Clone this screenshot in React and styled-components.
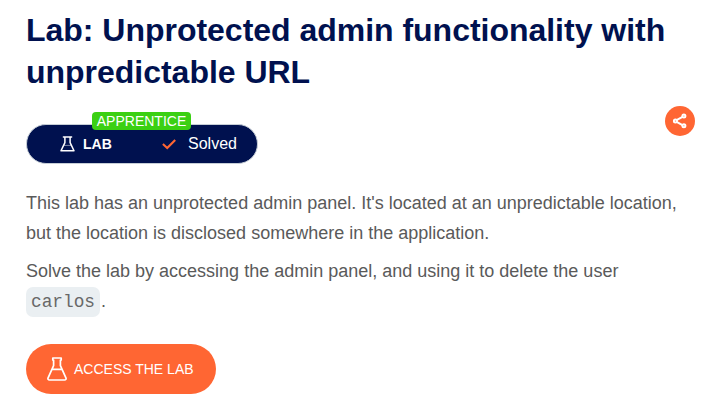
import React from 'react';
import styled, { createGlobalStyle } from 'styled-components';

const GlobalStyle = createGlobalStyle`
  * { box-sizing: border-box; }
  body {
    margin: 0;
    background: #fff;
    font-family: "Liberation Sans", Arial, sans-serif;
    overflow: hidden;
  }
`;

const Page = styled.main`
  width: 717px;
  height: 406px;
  padding: 9px 22px 0 26px;
`;

const Title = styled.h1`
  margin: 0;
  width: 660px;
  font-size: 32px;
  line-height: 42px;
  font-weight: 700;
  letter-spacing: -0.02px;
  color: #00114f;
`;

const StatusBar = styled.div`
  display: flex;
  justify-content: space-between;
  align-items: flex-start;
  height: 58px;
  margin-top: 13px;
`;

const StatusPill = styled.div`
  position: relative;
  display: flex;
  align-items: center;
  width: 232px;
  height: 40px;
  margin-top: 18px;
  padding-left: 33px;
  border: 1px solid #c6ced6;
  border-radius: 20px;
  background: #00114f;
  color: #fff;
`;

const LevelBadge = styled.span`
  position: absolute;
  left: 65px;
  top: -13px;
  width: 99px;
  height: 18px;
  border-radius: 4px;
  background: #3bd013;
  font-size: 14px;
  line-height: 19px;
  text-align: center;
`;

const LabLabel = styled.strong`
  width: 79px;
  margin-left: 8px;
  font-size: 14px;
`;

const SolvedLabel = styled.span`
  margin-left: 12px;
  font-size: 16px;
`;

const ShareButton = styled.button`
  display: grid;
  place-items: center;
  width: 30px;
  height: 30px;
  padding: 0;
  border: 0;
  border-radius: 50%;
  background: #ff6633;
`;

const Description = styled.section`
  margin-top: 24px;
  font-size: 18px;
  line-height: 30px;
  color: #5a5a5a;
`;

const Paragraph = styled.p`
  margin: 0 0 8px;
`;

const Code = styled.code`
  display: inline-block;
  height: 30px;
  margin: 1px 1px 0 0;
  padding: 0 5px;
  border-radius: 7px;
  background: #eaeff2;
  font-family: "Liberation Mono", "Courier New", monospace;
  font-size: 17.8px;
  color: #686868;
  vertical-align: top;
`;

const AccessButton = styled.button`
  display: flex;
  align-items: center;
  width: 190px;
  height: 50px;
  margin-top: 27px;
  padding: 0 0 0 21px;
  border: 0;
  border-radius: 25px;
  background: #ff6633;
  color: #fff;
  font-family: inherit;
  font-size: 14px;
`;

const ButtonLabel = styled.span`
  margin-left: 7px;
`;

function Flask() {
  return (
    <svg width="20" height="24" viewBox="0 0 20 24" fill="none" stroke="#fff"
      strokeWidth="1.7" strokeLinejoin="round" strokeLinecap="round">
      <path d="M5.8 1h8.4v2h-.8v5.6L18.9 20.8c.5 1.3-.1 2.2-1.3 2.2H2.4c-1.2 0-1.8-.9-1.3-2.2L6.6 8.6V3h-.8zM4.9 12.3h10.2" />
    </svg>
  );
}

function SmallFlask() {
  return (
    <svg width="15" height="16" viewBox="0 0 15 16" fill="none" stroke="#fff"
      strokeWidth="1.5" strokeLinejoin="round" strokeLinecap="round">
      <path d="M3.4 1h8.2M4.9 1v5.6L1 14.8h13L10.1 6.6V1" />
      <path d="M4 9.4h7" strokeWidth=".5" />
    </svg>
  );
}

function Check() {
  return (
    <svg width="14" height="12" viewBox="0 0 14 12" fill="none" stroke="#ff6633" strokeWidth="2.1">
      <path d="M.9 6.1l4.3 4L13.2 1.9" />
    </svg>
  );
}

function ShareIcon() {
  return (
    <svg width="16" height="16" viewBox="0 0 16 16" fill="none" stroke="#fff" strokeWidth="2">
      <circle cx="3.4" cy="8" r="1.5" />
      <circle cx="11.9" cy="3.1" r="1.5" />
      <circle cx="11.9" cy="12.7" r="1.5" />
      <path d="M4.6 7.2l5.9-3.3M4.6 8.8l5.9 3.3" />
    </svg>
  );
}

export default function App() {
  return (
    <>
      <GlobalStyle />
      <Page>
        <Title>Lab: Unprotected admin functionality with unpredictable URL</Title>
        <StatusBar>
          <StatusPill>
            <LevelBadge>APPRENTICE</LevelBadge>
            <SmallFlask />
            <LabLabel>LAB</LabLabel>
            <Check />
            <SolvedLabel>Solved</SolvedLabel>
          </StatusPill>
          <ShareButton aria-label="Share"><ShareIcon /></ShareButton>
        </StatusBar>
        <Description>
          <Paragraph>
            This lab has an unprotected admin panel. It's located at an unpredictable location,
            but the location is disclosed somewhere in the application.
          </Paragraph>
          <Paragraph>
            Solve the lab by accessing the admin panel, and using it to delete the user{' '}
            <Code>carlos</Code>.
          </Paragraph>
        </Description>
        <AccessButton>
          <Flask />
          <ButtonLabel>ACCESS THE LAB</ButtonLabel>
        </AccessButton>
      </Page>
    </>
  );
}
